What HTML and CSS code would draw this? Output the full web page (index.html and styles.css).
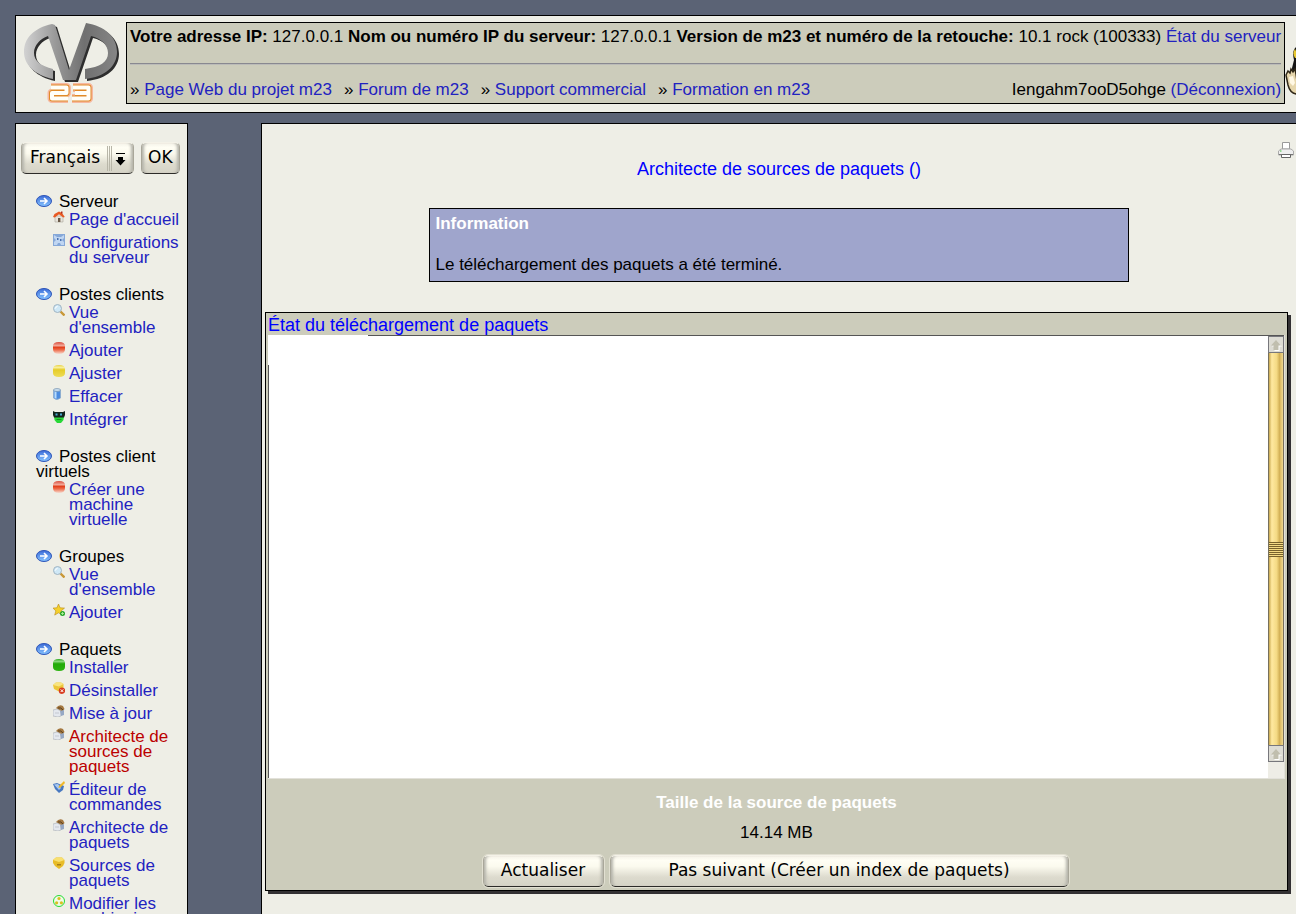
FILE: index.html
```html
<!DOCTYPE html>
<html lang="fr">
<head>
<meta charset="utf-8">
<title>m23 - Architecte de sources de paquets</title>
<link rel="stylesheet" href="styles.css">
</head>
<body>
<svg class="defs" width="0" height="0" aria-hidden="true">
  <defs>
    <linearGradient id="silver" x1="0" y1="0" x2="1" y2="0"><stop offset="0" stop-color="#d2d2d2"/><stop offset=".35" stop-color="#979797"/><stop offset=".65" stop-color="#707070"/><stop offset="1" stop-color="#858585"/></linearGradient>
    <linearGradient id="blue" x1="0" y1="0" x2="0" y2="1"><stop offset="0" stop-color="#3c6cd8"/><stop offset="1" stop-color="#86c4ff"/></linearGradient>
    <linearGradient id="red" x1="0" y1="0" x2="0" y2="1"><stop offset="0" stop-color="#d84a3a"/><stop offset=".3" stop-color="#f2a898"/><stop offset=".45" stop-color="#e2401c"/><stop offset=".65" stop-color="#ee6a48"/><stop offset="1" stop-color="#f6ddd2"/></linearGradient>
    <linearGradient id="yellow" x1="0" y1="0" x2="0" y2="1"><stop offset="0" stop-color="#e8d040"/><stop offset=".2" stop-color="#f8f0a0"/><stop offset=".4" stop-color="#e6cc28"/><stop offset="1" stop-color="#eedc58"/></linearGradient>
    <linearGradient id="green" x1="0" y1="0" x2="0" y2="1"><stop offset="0" stop-color="#28a818"/><stop offset=".2" stop-color="#8cd880"/><stop offset=".4" stop-color="#22aa08"/><stop offset="1" stop-color="#2cb410"/></linearGradient>
  </defs>
  <symbol id="i-arrow" viewBox="0 0 16 12"><ellipse cx="8" cy="6" rx="7.5" ry="5.5" fill="url(#blue)" stroke="#2e55b8"/><path d="M4 6h7M8 3l3 3-3 3" fill="none" stroke="#fff" stroke-width="1.6"/></symbol>
  <symbol id="i-home" viewBox="0 0 12 12"><path d="M2 5h8v6H2z" fill="#e8e4dc" stroke="#aaa49a" stroke-width=".6"/><path d="M5 7h2.4v4H5z" fill="#6a5a48"/><path d="M0 6l1.500-3L6 .5l3 1.500 2.800 4-1.600.4L6 3.200 1.800 6.500z" fill="#e85a24"/><path d="M8 .5h1.500v2H8z" fill="#b03020"/></symbol>
  <symbol id="i-config" viewBox="0 0 12 12"><path d="M0 0h12v12H0z" fill="#86a8d8"/><path d="M1 1l3 2h4l3-2v3L9 6l2 2v3H8L7 9H5l-1 2H1V8l2-2-2-2z" fill="#c0d6f2"/><path d="M4 4h1.500v2H4zM7 5h1.500v2H7z" fill="#4870b0"/></symbol>
  <symbol id="i-search" viewBox="0 0 12 12"><path d="M7 7l4.500 4.500" stroke="#c89838" stroke-width="2.400"/><circle cx="4.500" cy="4.500" r="4" fill="#cfe8f6" stroke="#a0b4c2"/><path d="M2.500 4.500a2 2 0 0 1 2-2" stroke="#fff" fill="none"/></symbol>
  <symbol id="i-red" viewBox="0 0 12 12"><path d="M0 4Q0 0 6 0t6 4v3q0 5-6 5T0 7z" fill="url(#red)"/></symbol>
  <symbol id="i-yellow" viewBox="0 0 12 12"><path d="M0 4Q0 0 6 0t6 4v4q0 4-6 4T0 8z" fill="url(#yellow)"/></symbol>
  <symbol id="i-green" viewBox="0 0 12 12"><path d="M0 4Q0 0 6 0t6 4v4q0 4-6 4T0 8z" fill="url(#green)"/></symbol>
  <symbol id="i-bin" viewBox="0 0 12 12"><path d="M.5 2v8q3 3 7 0V2z" fill="#4c8ce0" stroke="#88a8c8" stroke-width=".7"/><path d="M1.500 3v7l2 .8V4z" fill="#b8dcfc"/><ellipse cx="4" cy="2" rx="3.500" ry="1.500" fill="#c8dcec" stroke="#6688aa" stroke-width=".6"/></symbol>
  <symbol id="i-robot" viewBox="0 0 12 12"><path d="M1 5h10l-.5 4L8 12H4L1.500 9z" fill="#28d838"/><path d="M0 0l2 1h8l2-1v4l-1 2.500H1L0 4z" fill="#10241c"/><path d="M2.500 2.500h2v2h-2zM7 2.500h2v2H7z" fill="#48a8d0"/><path d="M3.500 8h5v1h-5z" fill="#189020"/></symbol>
  <symbol id="i-star" viewBox="0 0 12 12"><path d="M5.500 0l1.600 3.800 4.400.3-3.400 2.800 1.100 4.200-3.700-2.300-3.800 2.300 1.100-4.200L0 4.100l3.900-.3z" fill="#f4d02c" stroke="#b88c18" stroke-width=".6"/><circle cx="9.500" cy="9.500" r="2.500" fill="#28a82c"/><path d="M9.500 8v3M8 9.500h3" stroke="#b8f0a0" stroke-width=".8"/></symbol>
  <symbol id="i-remove" viewBox="0 0 12 12"><path d="M0 3l3-2.500h5L10.500 2v5L6 9.500 1 7z" fill="#ecc638"/><path d="M0 3l3-2.500h5L10.500 2 6 4.500z" fill="#f8e480"/><circle cx="9" cy="8.700" r="3.200" fill="#d83c20"/><path d="M7.700 7.400l2.600 2.600m0-2.600L7.700 10" stroke="#fff"/></symbol>
  <symbol id="i-pack" viewBox="0 0 12 12"><path d="M3 3q3-4 7-2l1.500 3L9 7z" fill="#a47840"/><path d="M5 3q3-1 5 2" stroke="#584020" fill="none"/><path d="M0 5l4-1 4 2v5l-3 1-5-1z" fill="#e4e8ee" stroke="#a8acb4" stroke-width=".6"/><path d="M7 6l4-1v5l-3 1z" fill="#96a8c4"/><path d="M2 8h4" stroke="#c4c8d0"/></symbol>
  <symbol id="i-edit" viewBox="0 0 12 12"><path d="M0 3l4-1 7 3-1 4-4 3L2 8z" fill="#4878c0"/><path d="M1 3.500L5 3l3 4-2 2z" fill="#a8c8f0"/><path d="M11 0L6 5l-.5 2 2-.5L12 2z" fill="#f0b828"/></symbol>
  <symbol id="i-source" viewBox="0 0 12 12"><path d="M0 3l3-2.500h6L11.500 3v3L10 9l-4 3-4-3L0 6z" fill="#e8bc28"/><path d="M0 3l3-2.500h6L11.500 3 6 5z" fill="#f8e070"/><path d="M4 7h4v1.500H4z" fill="#a88018"/></symbol>
  <symbol id="i-modify" viewBox="0 0 12 12"><circle cx="6" cy="6" r="5.500" fill="#f0fae8" stroke="#24dc34"/><circle cx="6" cy="3.500" r="1.600" fill="#d8c020"/><circle cx="3.600" cy="7.800" r="1.600" fill="#d8c020"/><circle cx="8.400" cy="7.800" r="1.600" fill="#d8c020"/></symbol>
  <symbol id="i-scroll" viewBox="0 0 12 12"><path d="M7 2.500L12 7.500H9.500V12h-5V7.500H2z" fill="#fff"/><path d="M6 1l5 5.500H8.500V11h-5V6.500H1z" fill="#c0beae"/></symbol>
</svg>

<header class="top">
  <svg class="logo" width="98" height="82" viewBox="0 0 98 82" role="img" aria-label="m23">
    <g fill="#2e2e2e" transform="translate(2 2)"><path d="M30 2C12 6 2 16 2 30c0 13 11 23 29 27V47C19 44 12 39 12 31c0-8 6-14 14-17l15 44h13L69 14c10 2 17 9 17 17 0 9-8 14-23 16v10c20-2 32-13 32-27C95 15 83 4 64 1L46 45 33 3z"/></g>
    <path d="M30 2C12 6 2 16 2 30c0 13 11 23 29 27V47C19 44 12 39 12 31c0-8 6-14 14-17l15 44h13L69 14c10 2 17 9 17 17 0 9-8 14-23 16v10c20-2 32-13 32-27C95 15 83 4 64 1L47 48 33 3z" fill="url(#silver)"/>
    <g fill="none" stroke-linejoin="round"><path d="M29 65.500h15.500V71H30v5.500h16M51 65.500h15.500v11H50M53 71h13" stroke="#f6b8a0" stroke-width="9"/><path d="M29 65.500h15.500V71H30v5.500h16M51 65.500h15.500v11H50M53 71h13" stroke="#e08a28" stroke-width="6"/><path d="M29 65.500h15.500V71H30v5.500h16M51 65.500h15.500v11H50M53 71h13" stroke="#fffef8" stroke-width="4"/></g>
  </svg>
  <div class="status">
    <p><b>Votre adresse IP:</b> 127.0.0.1 <b>Nom ou numéro IP du serveur:</b> 127.0.0.1 <b>Version de m23 et numéro de la retouche:</b> 10.1 rock (100333) <a href="#etat">État du serveur</a></p>
    <hr>
    <div class="row">
      <nav class="links">
        <span>» <a href="#web">Page Web du projet m23</a></span>
        <span>» <a href="#forum">Forum de m23</a></span>
        <span>» <a href="#support">Support commercial</a></span>
        <span>» <a href="#formation">Formation en m23</a></span>
      </nav>
      <span>Iengahm7ooD5ohge <a href="#logout">(Déconnexion)</a></span>
    </div>
  </div>
  <svg class="mascot" width="16" height="82" viewBox="0 0 16 82" aria-hidden="true">
    <path d="M10 26q-3 4-1 12l-2 8 1 24 8 3V22z" fill="#141414"/><path d="M10 27q-3 4 0 9h4z" fill="#e8c830"/>
    <path d="M1 53l2-4 2 2 1-4 2 3 2-3 1 5 1 7 1 11-2 2q-6-1-8-9z" fill="#e6d6ac" stroke="#302818" stroke-width="1.500"/><path d="M4 55l4-1 2 7-2 3-3-3z" fill="#fff8e4"/>
  </svg>
</header>

<div class="page">
  <aside class="side">
    <form class="lang">
      <span class="pick">
        <select class="btn" aria-label="Langue"><option>Français</option></select>
        <svg class="drop" width="24" height="28" viewBox="0 0 24 28" aria-hidden="true"><path d="M.5 3v25M2.500 3v25M4.500 3v25" stroke="#b8b6a8"/><path d="M9 10h9v1H9zM11 14h5v3h2.500l-5 5.500-5-5.500H11z" fill="#000"/></svg>
      </span>
      <button class="btn" type="button">OK</button>
    </form>
    <nav class="menu">
      <section>
        <h2><svg><use href="#i-arrow"/></svg>Serveur</h2>
        <ul>
          <li><svg><use href="#i-home"/></svg><a href="#a">Page d'accueil</a></li>
          <li><svg><use href="#i-config"/></svg><a href="#a">Configurations du serveur</a></li>
        </ul>
      </section>
      <section>
        <h2><svg><use href="#i-arrow"/></svg>Postes clients</h2>
        <ul>
          <li><svg><use href="#i-search"/></svg><a href="#a">Vue d'ensemble</a></li>
          <li><svg><use href="#i-red"/></svg><a href="#a">Ajouter</a></li>
          <li><svg><use href="#i-yellow"/></svg><a href="#a">Ajuster</a></li>
          <li><svg><use href="#i-bin"/></svg><a href="#a">Effacer</a></li>
          <li><svg><use href="#i-robot"/></svg><a href="#a">Intégrer</a></li>
        </ul>
      </section>
      <section>
        <h2><svg><use href="#i-arrow"/></svg>Postes client virtuels</h2>
        <ul>
          <li><svg><use href="#i-red"/></svg><a href="#a">Créer une machine virtuelle</a></li>
        </ul>
      </section>
      <section>
        <h2><svg><use href="#i-arrow"/></svg>Groupes</h2>
        <ul>
          <li><svg><use href="#i-search"/></svg><a href="#a">Vue d'ensemble</a></li>
          <li><svg><use href="#i-star"/></svg><a href="#a">Ajouter</a></li>
        </ul>
      </section>
      <section>
        <h2><svg><use href="#i-arrow"/></svg>Paquets</h2>
        <ul>
          <li><svg><use href="#i-green"/></svg><a href="#a">Installer</a></li>
          <li><svg><use href="#i-remove"/></svg><a href="#a">Désinstaller</a></li>
          <li><svg><use href="#i-pack"/></svg><a href="#a">Mise à jour</a></li>
          <li><svg><use href="#i-pack"/></svg><a class="current" href="#a">Architecte de sources de paquets</a></li>
          <li><svg><use href="#i-edit"/></svg><a href="#a">Éditeur de commandes</a></li>
          <li><svg><use href="#i-pack"/></svg><a href="#a">Architecte de paquets</a></li>
          <li><svg><use href="#i-source"/></svg><a href="#a">Sources de paquets</a></li>
          <li><svg><use href="#i-modify"/></svg><a href="#a">Modifier les combinaisons</a></li>
        </ul>
      </section>
    </nav>
  </aside>

  <main class="main">
    <a class="print" href="#print" aria-label="Imprimer"><svg width="16" height="16" viewBox="0 0 16 16"><path d="M4.500.5h7V7h-7z" fill="#fff" stroke="#999"/><path d="M3 7h10l2.500 2v4H.5V9z" fill="#eee" stroke="#aaa"/><path d="M1 12.500h14" stroke="#777"/><path d="M3.500 12.500h9v3h-9z" fill="#fff" stroke="#666"/><path d="M2 9h1.500" stroke="#40c040"/></svg></a>
    <h1>Architecte de sources de paquets ()</h1>
    <section class="info">
      <h2>Information</h2>
      <p>Le téléchargement des paquets a été terminé.</p>
    </section>
    <section class="card">
      <h2><label for="log">État du téléchargement de paquets</label></h2>
      <div class="log">
        <textarea id="log" readonly></textarea>
        <div class="bar" aria-hidden="true">
          <span class="step"><svg><use href="#i-scroll"/></svg></span>
          <span class="thumb"><i></i></span>
          <span class="step"><svg><use href="#i-scroll"/></svg></span>
        </div>
      </div>
      <h3>Taille de la source de paquets</h3>
      <p>14.14 MB</p>
      <div class="actions">
        <button class="btn" type="button">Actualiser</button>
        <button class="btn wide" type="button">Pas suivant (Créer un index de paquets)</button>
      </div>
    </section>
  </main>
</div>
</body>
</html>
```
FILE: styles.css
```css
* { box-sizing: border-box; }

body {
  margin: 0;
  padding: 15px 0 0 15px;
  height: 100vh;
  overflow: hidden;
  display: flex;
  flex-direction: column;
  gap: 10px;
  background: #5b6375;
  color: #000;
  font: 17px/20px "Liberation Sans", Arial, sans-serif;
}

h1, h2, h3, p, ul { margin: 0; padding: 0; font-size: inherit; font-weight: normal; }
ul { list-style: none; }
a { color: #2222c0; text-decoration: none; }
.defs { position: absolute; }

.top {
  display: flex;
  flex: none;
  padding: 6px 0 8px 6px;
  border: 1px solid #000;
  border-right: 0;
  background: #eeeee6;
}
.logo, .mascot { flex: none; }
.logo { margin-right: 6px; }
.status {
  padding: 4px 3px 3px;
  border: 1px solid #000;
  background: #ccccbb;
  white-space: nowrap;
}
.status hr {
  height: 2px;
  margin: 16px 0 15px;
  border: 0;
  border-top: 1px solid #888890;
  border-bottom: 1px solid #bbbbb8;
}
.row { display: flex; justify-content: space-between; }
.links { display: flex; gap: 12px; }

.page { display: flex; flex: 1; min-height: 0; gap: 73px; }

.side {
  flex: none;
  width: 173px;
  padding: 18px 6px 0 5px;
  border: 1px solid #000;
  border-bottom: 0;
  background: #eeeee6;
  overflow: hidden;
}
.lang { display: flex; gap: 7px; }
.pick { position: relative; display: block; }
.drop { position: absolute; right: 3px; top: 1px; pointer-events: none; }

.btn {
  appearance: none;
  height: 32px;
  margin: 0;
  padding: 0 6px 2px;
  border: 1px solid #a9a79a;
  border-top-color: #f4f2e8;
  border-bottom-color: #2c2b28;
  border-radius: 5px;
  background: linear-gradient(#f4f2e8, #fffef4 15%, #fbfaee 35%, #dddbce 70%, #d5d3c6);
  box-shadow: inset 4px 0 3px -2px #b4b3aa, inset -4px 0 3px -2px #b4b3aa;
  color: #000;
  font: 17px/20px "DejaVu Sans", sans-serif;
}
select.btn { width: 113px; padding: 0 28px 2px 8px; }

.menu { padding: 20px 0 0 15px; line-height: 15px; }
.menu section { padding-bottom: 22px; }
.menu h2 { padding-bottom: 3px; }
.menu h2 svg { width: 16px; height: 12px; margin-right: 7px; vertical-align: 0; }
.menu ul { display: grid; gap: 8px; padding-left: 17px; }
.menu li { display: flex; gap: 4px; align-items: flex-start; }
.menu li svg { flex: none; width: 12px; height: 12px; margin-top: -1px; }
.menu .current { color: #bb0000; }

.main {
  flex: 1;
  min-width: 0;
  padding: 18px 8px 0 3px;
  border: 1px solid #000;
  border-width: 1px 0 0 1px;
  background: #eeeee6;
}
.print { display: block; width: 16px; height: 16px; margin: 0 -6px 0 auto; }
.print svg { display: block; }
.main h1 { margin-right: -5px; color: #0000ff; font-size: 18px; line-height: 22px; text-align: center; }
.info {
  width: 700px;
  max-width: 100%;
  margin: 28px auto 30px;
  padding: 5px 6px 6px;
  border: 1px solid #000;
  background: #9fa5cc;
}
.info h2, .card h3 { color: #fff; font-weight: bold; }
.info h2 { padding-bottom: 21px; }

.card {
  padding: 3px 2px 3px;
  border: 1px solid #000;
  background: #ccccbb;
  box-shadow: 3px 3px #333133;
  text-align: center;
}
.card h2 { color: #0000ff; font-size: 18px; line-height: 19px; text-align: left; }
.log {
  display: flex;
  height: 444px;
  border-right: 1px solid #e2e1da;
  border-bottom: 1px solid #e2e1da;
}
.log textarea {
  flex: 1;
  min-width: 0;
  padding: 2px;
  border: 0;
  resize: none;
  outline: 0;
  background:
    linear-gradient(#555, #555) 100px 0 / 100% 1px no-repeat,
    linear-gradient(#555, #555) 0 30px / 1px 100% no-repeat,
    #fff;
}
.bar {
  display: flex;
  flex-direction: column;
  width: 16px;
  padding-bottom: 16px;
  border-top: 1px solid #555;
  background: #eeede6;
}
.step { height: 17px; padding: 2px 1px; border: 1px solid #77777c; background: #dddcd4; line-height: 0; }
.step svg { width: 12px; height: 12px; }
.thumb {
  flex: 1;
  display: grid;
  place-items: center stretch;
  border-left: 1px solid #77705c;
  border-right: 1px solid #77705c;
  background: linear-gradient(90deg, #c8a850, #ffe9a0 20%, #f4da84 55%, #d4b258 75%, #f0d890);
}
.thumb i { height: 15px; background: repeating-linear-gradient(#77622c 0 1px, #f4da84 1px 2px); }
.card h3 { padding-top: 14px; }
.card p { padding: 10px 0 12px; }
.actions { display: flex; justify-content: center; gap: 6px; padding-right: 2px; }
.actions .btn { min-width: 121px; outline: 1px solid #e2e0d2; }
.actions .wide { width: 459px; }

@media (min-width: 1200px) {
  .info { margin-left: calc(50% - 348px); }
}
```
